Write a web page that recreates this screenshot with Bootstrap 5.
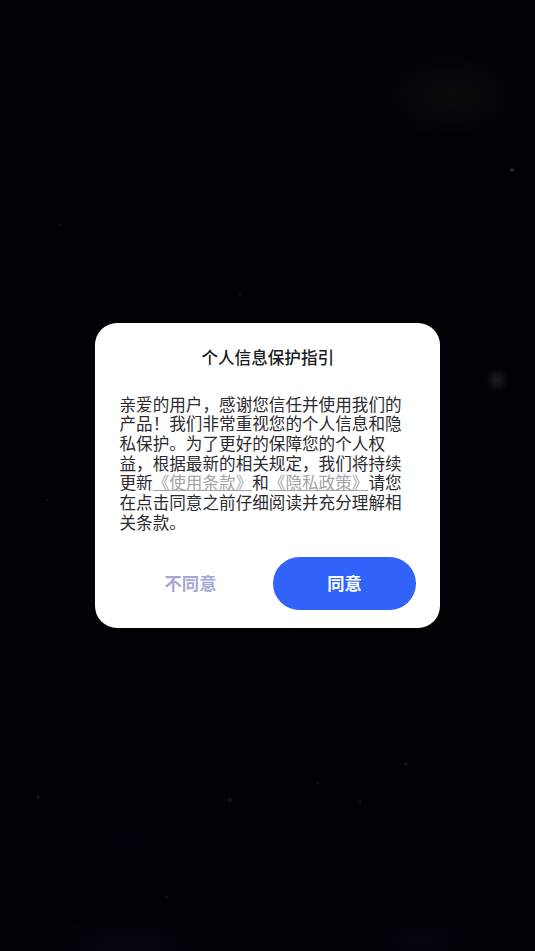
<!DOCTYPE html>
<html lang="zh-CN">
<head>
<meta charset="utf-8">
<title>个人信息保护指引</title>
<meta name="viewport" content="width=device-width, initial-scale=1">
<link rel="stylesheet" href="https://cdn.jsdelivr.net/npm/bootstrap@5.3.0/dist/css/bootstrap.min.css">
<style>
body {
  font-family: "Noto Sans CJK SC", "Liberation Sans", sans-serif;
  background-color: #020206;
  background-image:
    radial-gradient(circle 12px at 497px 380px, rgba(120,120,120,.24), transparent),
    radial-gradient(circle 3px at 512px 170px, rgba(170,170,180,.3), transparent),
    radial-gradient(circle 2px at 38px 797px, rgba(130,130,140,.28), transparent),
    radial-gradient(circle 2.5px at 230px 800px, rgba(100,130,150,.3), transparent),
    radial-gradient(circle 1.5px at 318px 783px, rgba(110,110,130,.3), transparent),
    radial-gradient(circle 2px at 406px 764px, rgba(100,120,150,.3), transparent),
    radial-gradient(circle 1.5px at 360px 802px, rgba(100,110,140,.3), transparent),
    radial-gradient(circle 2px at 167px 897px, rgba(90,100,120,.28), transparent),
    radial-gradient(circle 1.5px at 60px 225px, rgba(110,110,120,.25), transparent),
    radial-gradient(circle 1.5px at 240px 295px, rgba(110,110,120,.25), transparent),
    radial-gradient(circle 1.5px at 47px 500px, rgba(110,110,120,.22), transparent),
    radial-gradient(circle 1.5px at 480px 640px, rgba(110,110,120,.22), transparent),
    radial-gradient(ellipse 70px 45px at 450px 95px, rgba(20,20,23,.5), transparent),
    radial-gradient(ellipse 90px 30px at 130px 945px, rgba(5,8,24,.55), transparent),
    radial-gradient(ellipse 70px 25px at 420px 940px, rgba(5,8,24,.45), transparent),
    radial-gradient(ellipse 45px 60px at 125px 840px, rgba(3,5,16,.45), transparent);
  background-repeat: no-repeat;
}
.stage { min-height: 951px; }
.dialog-box {
  width: 345px;
  height: 305px;
  border-radius: 22px;
  padding: 22px 24px 18px 24.5px;
}
.dialog-title {
  font-size: 16.6px;
  line-height: 24px;
  font-weight: 500;
  color: #1c1c1e;
  margin-bottom: 25.5px;
}
.dialog-text {
  font-size: 16.6px;
  line-height: 19.7px;
  color: #2b2b2f;
  margin: 0;
}
.policy-link {
  color: #a3a3a8;
  text-decoration: none;
  background: linear-gradient(#a3a3a8, #a3a3a8) 0 20px / 100% 1px no-repeat;
}
.btn-decline, .btn-agree {
  height: 53px;
  font-size: 17.3px;
  font-weight: 700;
  border: 0;
}
.btn-decline { color: #a5a8d0; background: transparent; width: 143px; margin-left: -.5px; }
.btn-agree { color: #fff; background: #3163fb; width: 143px; border-radius: 27px; }
.btn-agree:hover, .btn-agree:active { color: #fff; background: #3163fb; }
.btn-label { display: block; margin-top: -2px; }
</style>
</head>
<body>
<main class="stage d-flex align-items-center justify-content-center">
  <section class="dialog-box bg-white d-flex flex-column">
    <h1 class="dialog-title text-center">个人信息保护指引</h1>
    <p class="dialog-text">亲爱的用户，感谢您信任并使用我们的产品！我们非常重视您的个人信息和隐私保护。为了更好的保障您的个人权益，根据最新的相关规定，我们将持续更新<a class="policy-link" href="#">《使用条款》</a>和<a class="policy-link" href="#">《隐私政策》</a>请您在点击同意之前仔细阅读并充分理解相关条款。</p>
    <div class="d-flex justify-content-between mt-auto">
      <button type="button" class="btn btn-decline p-0"><span class="btn-label">不同意</span></button>
      <button type="button" class="btn btn-agree p-0"><span class="btn-label">同意</span></button>
    </div>
  </section>
</main>
<script src="https://cdn.jsdelivr.net/npm/bootstrap@5.3.0/dist/js/bootstrap.bundle.min.js"></script>
</body>
</html>
